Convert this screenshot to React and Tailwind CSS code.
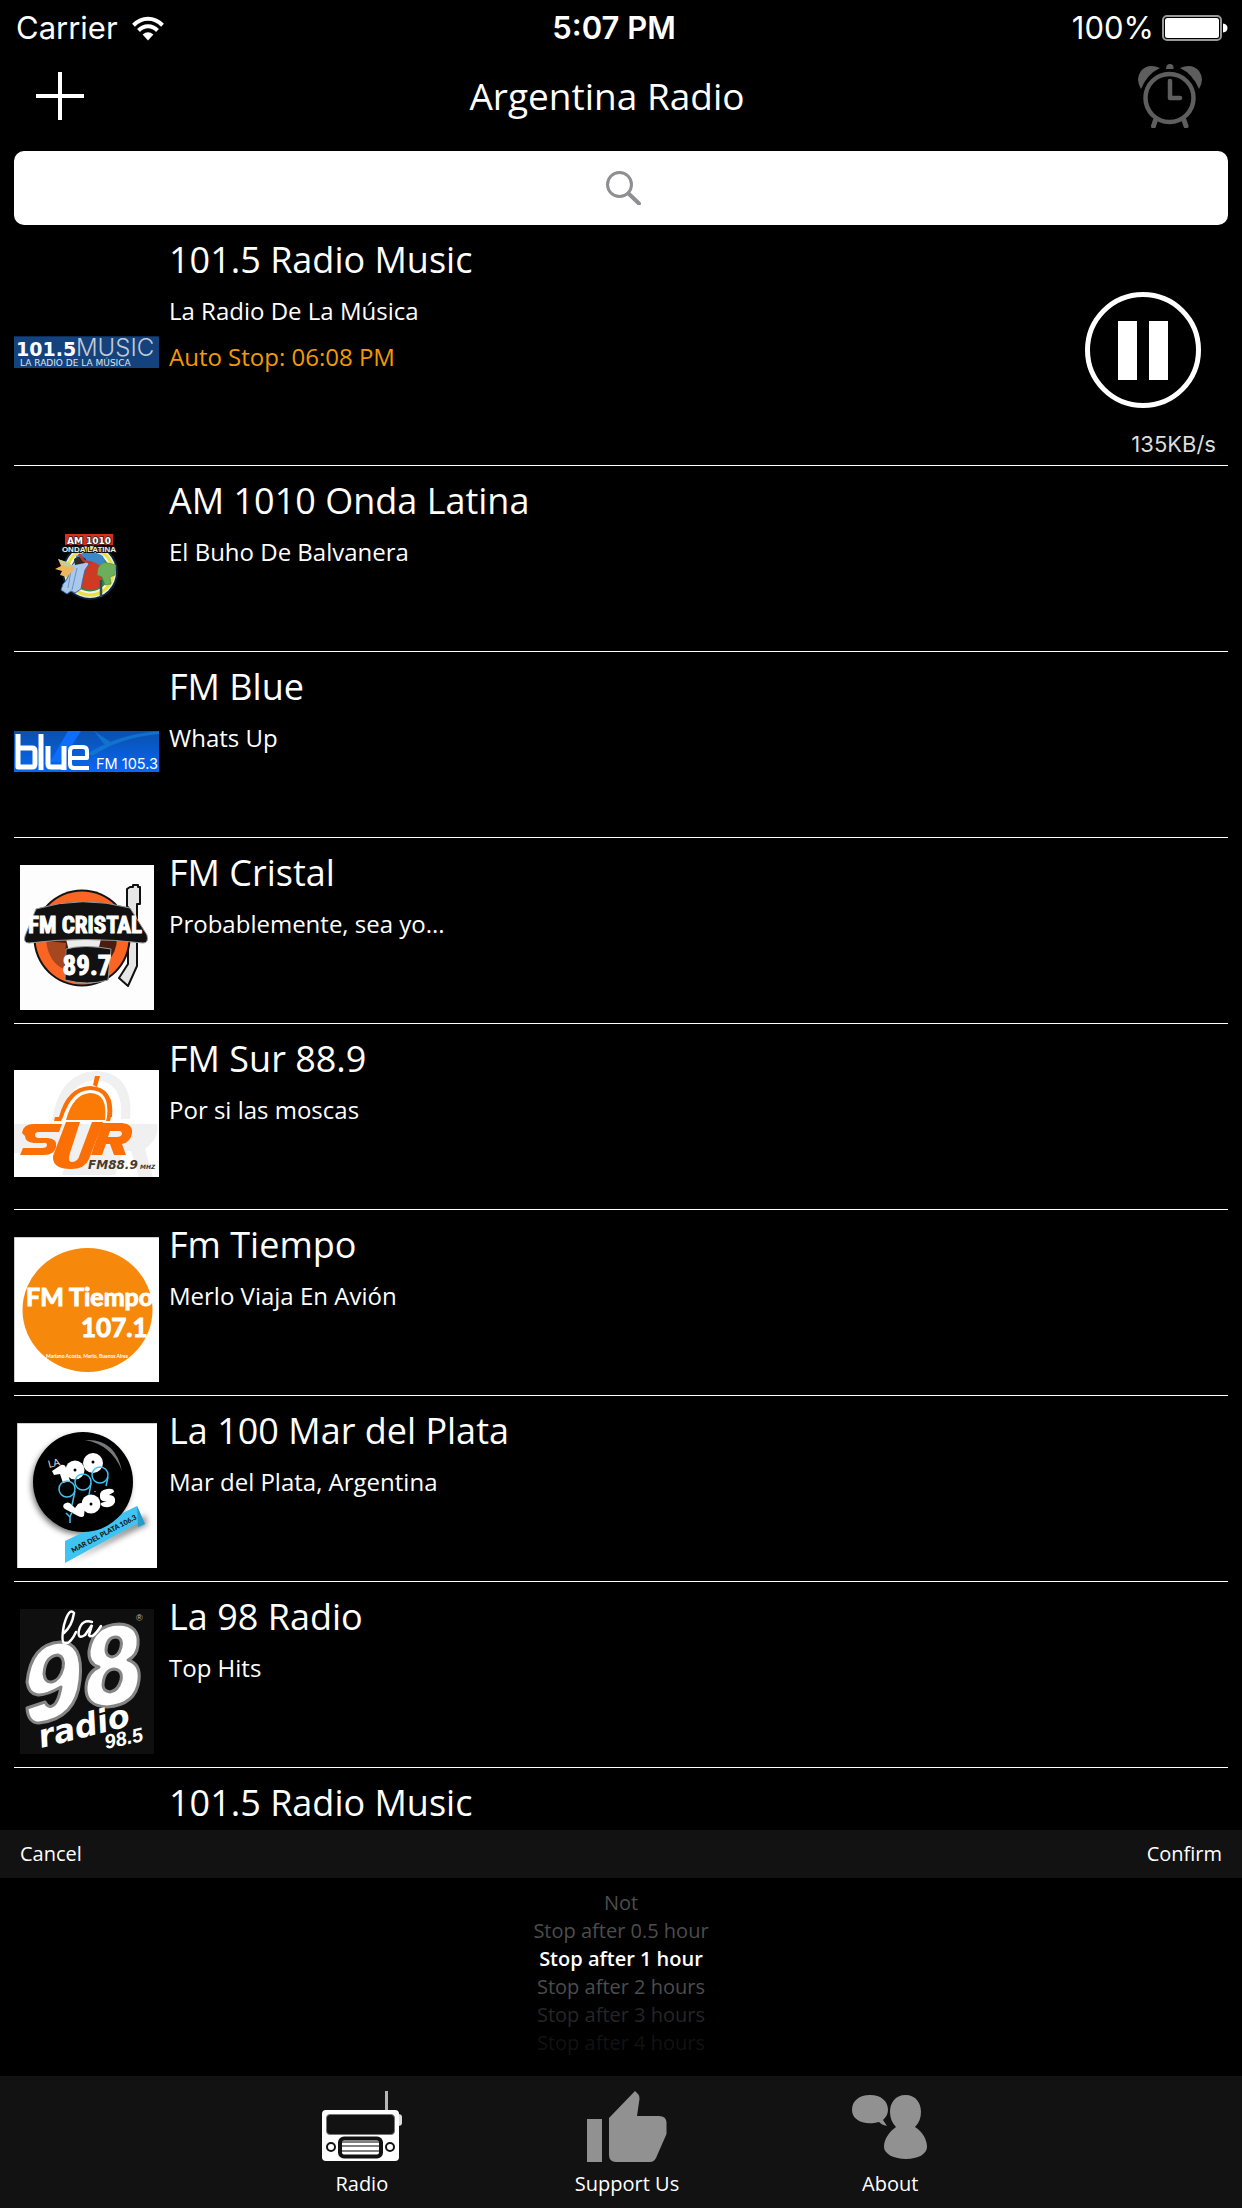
import { useState } from "react";

const narrow = '"Liberation Sans Narrow", "Roboto Condensed", "Liberation Sans", sans-serif';

function MusicLogo() {
  return (
    <svg viewBox="0 0 145 32" className="w-[145px]" role="img" aria-label="101.5 Music">
      <rect width="145" height="32" fill="#14427c" />
      <rect width="145" height="1" fill="#0c2c57" />
      <text x="2" y="20" fontFamily="DejaVu Sans" fontWeight="700" fontSize="19" fill="#fff">101.5</text>
      <text x="62" y="20" fontFamily="Inter, sans-serif" fontWeight="300" fontSize="24" fill="#c3cad6">MUSIC</text>
      <text x="6" y="30" fontFamily="DejaVu Sans" fontSize="9" fill="#dfe5ee">LA RADIO DE LA MÚSICA</text>
    </svg>
  );
}

function OndaLogo() {
  return (
    <svg viewBox="0 0 64 68" className="w-[64px]" role="img" aria-label="AM 1010 Onda Latina">
      <circle cx="35" cy="40" r="28" fill="#0b2440" />
      <circle cx="35" cy="40" r="26" fill="#e9ecdf" />
      <circle cx="35" cy="40" r="24.5" fill="#e8e337" />
      <circle cx="35" cy="40" r="21.5" fill="#f5f5ee" />
      <circle cx="35" cy="40" r="19.5" fill="#2d8a3e" />
      <path d="M21 24q14-8 27 0l3 10-14 4-17-4z" fill="#3b87c9" />
      <path d="M25 32q12-6 20 2l2 20q-9 6-20 2z" fill="#cf3a22" />
      <path d="M43 36q4-7 10-5l8 2-1 10-5 2 1 7-6 1-3-8-5-2z" fill="#6cae5b" stroke="#477f3c" strokeWidth=".6" />
      <path d="M20 30q8-6 14 2l-4 6q-3 12-4 19l-6 4-4-2-4 3-6-4 2-6q7-6 6-16z" fill="#a9c8ec" stroke="#3e68a4" strokeWidth="1" />
      <path d="M16 38l-3 18M22 36l-5 22" stroke="#6a92c8" strokeWidth="1" />
      <path d="M3 27l12 5 5 4-8 9-7-2 2-4-7-2 6-3z" fill="#efb65d" />
      <path d="M3 27l12 4 2 4-8-1z" fill="#c3cf9a" />
      <path d="M19 27q6-5 12 0l-1 4-10 2z" fill="#302825" />
      <path d="M24 22l5 7 8 2" fill="none" stroke="#c2352b" strokeWidth="2.500" />
      <path d="M46 48v17" stroke="#3a4550" strokeWidth="2.500" />
      <rect x="10" y="2" width="48" height="11" fill="#d92d20" />
      <text x="34" y="11.500" textAnchor="middle" fontFamily="DejaVu Sans" fontWeight="700" fontSize="9" fill="#fff" stroke="#222" strokeWidth="1.500" paintOrder="stroke">AM 1010</text>
      <text x="34" y="20" textAnchor="middle" fontFamily="Liberation Sans" fontWeight="700" fontSize="8" fill="#eee" stroke="#111" strokeWidth="2" paintOrder="stroke">ONDA LATINA</text>
    </svg>
  );
}

function BlueLogo() {
  return (
    <svg viewBox="0 0 145 41" className="w-[145px]" role="img" aria-label="Blue FM 105.3">
      <defs>
        <linearGradient id="blueSky" x1="0" y1="0" x2="0" y2="1">
          <stop offset="0" stopColor="#0a50ad" />
          <stop offset="1" stopColor="#0768f5" />
        </linearGradient>
      </defs>
      <rect width="145" height="41" fill="url(#blueSky)" />
      <path d="M54 0h13L47 31H36z" fill="#0d6dff" />
      <path d="M72 24Q100 4 145 0v3Q105 7 80 24zM80 0l18 12-8 1z" fill="#167fd3" opacity=".7" />
      <g fill="none" stroke="#fff" strokeWidth="5" strokeLinejoin="round">
        <path d="M4 3v33h14q3 0 3-3V20q0-3-3-3H4" />
        <path d="M27 3v36" />
        <path d="M34 15v18q0 3 3 3h13M50 15v24" />
        <path d="M56 27h17v-7q0-4-4-4h-9q-4 0-4 4v13q0 4 4 4h15" strokeWidth="4" />
      </g>
      <text x="82" y="38" fontFamily="Inter, sans-serif" fontSize="14.500" fill="#fff">FM 105.3</text>
    </svg>
  );
}

function CristalLogo() {
  return (
    <svg viewBox="0 0 134 145" className="w-[134px]" role="img" aria-label="FM Cristal 89.7">
      <rect width="134" height="145" fill="#fdfdfd" />
      <path d="M110 22h3v-2h5v2h2v17h-3v62l-9 20-9-8 9-14V42h-1V24z" fill="#e6e6e6" stroke="#111" strokeWidth="2" strokeLinejoin="round" />
      <circle cx="62" cy="73" r="48.500" fill="#111" />
      <circle cx="62" cy="73" r="46.500" fill="#fb6524" />
      <circle cx="62" cy="73" r="35" fill="#4b1d10" />
      <path d="M45 70h37l-5 20H50z" fill="#ececec" />
      <path d="M26 76q3 22 18 28l2-26z" fill="#a74720" />
      <path d="M16 44q46-14 94-1l17 27q2 8-4 8-58-7-114 0-6 0-4-7z" fill="#111" stroke="#999" strokeWidth="1" />
      <text x="65" y="68" textAnchor="middle" fontFamily={narrow} fontWeight="700" fontSize="23" fill="#fff" stroke="#fff" strokeWidth="1">FM CRISTAL</text>
      <path d="M46 84q18-5 45 0l-3 31q-20 6-43 0z" fill="#111" stroke="#999" strokeWidth="1" />
      <text x="67" y="110" textAnchor="middle" fontFamily={narrow} fontWeight="700" fontSize="27" fill="#fff" stroke="#fff" strokeWidth="1">89.7</text>
    </svg>
  );
}

function SurLogo() {
  return (
    <svg viewBox="0 0 145 107" className="w-[145px]" role="img" aria-label="Sur FM 88.9">
      <rect width="145" height="107" fill="#fff" />
      <path d="M38 50Q46 2 82 1q38 2 34 48h-9Q110 12 82 10 56 10 48 50z" fill="#f1f0f0" />
      <path d="M0 54h143q3 14-12 25l8 28h-14l-8-26h-8l-8 24H48l7-22H0z" fill="#f1f0f0" />
      <path d="M79 15l2-9h5l-3 11z" fill="#fb6f05" />
      <path d="M40 51l1-4h4q8-30 31-31 25 1 22 31h-1l-1 4h-4l1-4q3-27-17-27-18 0-27 27l-2 4z" fill="#fb6f05" />
      <path d="M52 50q7-26 24-27 18 0 15 27z" fill="#fb7a05" />
      <path d="M8 63q1-9 12-9h28l-3 8H25q-4 0-4 3t4 3h9q10 1 8 9-2 8-12 8H6l3-7h19q5 0 5-3t-4-2h-9q-9-1-9-7z" fill="#fb6f05" />
      <path d="M52 52h14L56 83q-3 9 2 9 6 0 8-8l12-32h11L75 89q-4 10-18 10-19 0-18-13z" fill="#fb6f05" />
      <path fillRule="evenodd" d="M88 53h20q11 1 10 10-1 9-10 11l4 11h-12l-4-11h-4l-4 11H77zm8 8l-2 6h9q4 0 5-3 0-3-3-3z" fill="#fb6f05" />
      <text x="74" y="99" fontFamily="DejaVu Sans" fontWeight="700" fontStyle="italic" fontSize="12" fill="#463a2a">FM88.9</text>
      <text x="126" y="99" fontFamily="DejaVu Sans" fontWeight="700" fontStyle="italic" fontSize="6" fill="#463a2a">MHZ</text>
    </svg>
  );
}

function TiempoLogo() {
  return (
    <svg viewBox="0 0 145 145" className="w-[145px]" role="img" aria-label="FM Tiempo 107.1">
      <rect width="145" height="145" fill="#fff" />
      <path d="M0 145V0h145" fill="none" stroke="#999" strokeWidth="1" />
      <ellipse cx="73.500" cy="73" rx="65" ry="62" fill="#f6890b" />
      <text x="12" y="69" fontFamily="Lato, sans-serif" fontWeight="700" fontSize="25" fill="#fff" stroke="#fff" strokeWidth="1">FM Tiempo</text>
      <text x="67" y="100" fontFamily="Lato, sans-serif" fontWeight="700" fontSize="26" fill="#fff" stroke="#fff" strokeWidth="1">107.1</text>
      <text x="32" y="121" fontFamily="Lato, sans-serif" fontWeight="700" fontSize="5" fill="#fff">Mariano Acosta, Merlo, Buenos Aires</text>
    </svg>
  );
}

function La100Logo() {
  return (
    <svg viewBox="0 0 140 145" className="w-[140px]" role="img" aria-label="La 100 y vos, Mar del Plata 106.3">
      <defs>
        <filter id="discShadow" x="-20%" y="-20%" width="140%" height="140%">
          <feGaussianBlur stdDeviation="3" />
        </filter>
      </defs>
      <rect width="140" height="145" fill="#fff" />
      <path d="M0 145V0h140" fill="none" stroke="#999" strokeWidth="1" />
      <circle cx="64" cy="62" r="49" fill="#000" opacity=".6" filter="url(#discShadow)" />
      <path d="M52 139l70-34 8-3-2-10z" fill="#000" opacity=".5" filter="url(#discShadow)" />
      <path d="M48 118l72-35 8 18-6 3-1-4-73 40z" fill="#3fc3f1" />
      <path d="M120 83l8 18-7 3z" fill="#279cc9" />
      <circle cx="66" cy="59" r="50" fill="#000" />
      <path d="M68 17q30-2 37 31-10-26-37-31z" fill="#77787b" />
      <text x="32" y="45" transform="rotate(-14 32 45)" fontFamily="Lato, sans-serif" fontSize="10" fill="#ddd">LA</text>
      <g fill="#fff">
        <path d="M35 48l9-6q4-1 5 3l4 13-7 2-3-9-6 1z" />
        <circle cx="58" cy="47" r="9.500" />
        <circle cx="76" cy="40" r="10" />
        <path d="M47 81q4-3 7 0l4 4 3-4q5-3 7 2l-1 10q-2 2-6 0l-13-7q-3-2-1-5z" />
        <circle cx="74" cy="81" r="9.500" />
        <path d="M83 74q-1-7 7-8 7-1 7 3l-5 3q7 0 6 7-2 6-10 5-5-1-4-4l6-2q-7 1-7-4z" />
      </g>
      <circle cx="58" cy="47" r="1.500" /><circle cx="76" cy="39" r="1.500" /><circle cx="74" cy="81" r="1.500" />
      <g fill="none" stroke="#3fc3f1" strokeWidth="1.500">
        <circle cx="50" cy="66" r="8" />
        <circle cx="66" cy="59" r="8" />
        <circle cx="83" cy="52" r="8" />
        <path d="M58 68l-3 14M74 60l-2 12M91 54l-2 9M78 68v1M49 90l4 4 2-5M53 94v6" />
      </g>
      <text x="56" y="130" transform="rotate(-28 56 130)" fontFamily="Lato, sans-serif" fontWeight="900" fontSize="7" fill="#111">MAR DEL PLATA 106.3</text>
    </svg>
  );
}

function La98Logo() {
  return (
    <svg viewBox="0 0 134 145" className="w-[134px]" role="img" aria-label="La 98 Radio 98.5">
      <rect width="134" height="145" fill="#0f0f0f" />
      <g fill="#fff" stroke="#858585" strokeWidth="3" fillRule="evenodd" strokeLinejoin="round">
        <path d="M7 73Q11 35 40 33q24 0 20 38-4 39-41 43-11 0-12-15l18-6q3 6 7 4 6-2 9-19-31 18-34-5zM24 65q1-18 14-19 7 2 5 13-3 12-11 14-7 1-8-8z" />
        <path d="M69 42q4-26 30-27 21 1 19 21-1 11-10 15 13 4 11 20-3 25-32 27-22-1-21-20 1-15 13-20-11-3-10-16zM86 41q1-13 10-13 7 1 5 10-2 9-9 10-6-1-6-7zM83 76q1-15 11-16 9 1 7 11-3 11-11 12-7-1-7-7z" />
      </g>
      <path d="M44 24q8-7 10-20-5-6-10 12-3 16 0 18 6 2 12-11M72 13q-10-3-13 8-2 10 6 5l7-10-3 10q3 5 12-9" fill="none" stroke="#fff" strokeWidth="2.500" strokeLinecap="round" />
      <text x="21" y="139" transform="rotate(-14 21 139)" fontFamily="DejaVu Sans" fontWeight="700" fontStyle="italic" fontSize="32" fill="#fff">radio</text>
      <text x="86" y="140" transform="rotate(-12 86 140)" fontFamily="Liberation Sans" fontWeight="700" fontStyle="italic" fontSize="20" fill="#fff">98.5</text>
      <text x="116" y="12" fontFamily="Liberation Sans" fontSize="9" fill="#bbb">®</text>
    </svg>
  );
}

function WifiIcon() {
  return (
    <svg viewBox="0 0 32 25" className="w-8" aria-hidden="true">
      <g fill="none" stroke="#fff" strokeWidth="4">
        <path d="M1.500 9.200Q8 2.800 16 2.800t14.500 6.400" />
        <path d="M6.500 14.500Q10.600 10.300 16 10.300t9.500 4.200" />
      </g>
      <path d="M10.600 18.500Q16 14 21.400 18.500L16 24.500z" fill="#fff" />
    </svg>
  );
}

function BatteryIcon() {
  return (
    <svg viewBox="0 0 66 26" className="w-[66px]" aria-hidden="true">
      <rect x="1" y="1" width="58" height="24" rx="4" fill="none" stroke="#999" strokeWidth="2" />
      <rect x="3" y="3" width="54" height="20" rx="2.500" fill="#fff" />
      <path d="M61 8.500q4.500.5 4.500 4.500T61 17.500z" fill="#fff" />
    </svg>
  );
}

function AlarmIcon() {
  return (
    <svg viewBox="0 0 64 64" className="w-16" aria-hidden="true">
      <g fill="#5e5e5e">
        <path d="M28 5q0-5 4-5t3.500 5z" />
        <path d="M3 25Q-3 15 3 7 10-1 22 4 9 10 3 25z" />
        <path d="M61 25q6-10 0-18Q54-1 42 4q13 6 19 21z" />
      </g>
      <circle cx="31.500" cy="34" r="24" fill="none" stroke="#5e5e5e" strokeWidth="4.500" />
      <path d="M32 17v17h10" fill="none" stroke="#5e5e5e" strokeWidth="4.500" strokeLinecap="round" strokeLinejoin="round" />
      <path d="M17.500 56l-2 6M46 56l2 6" stroke="#5e5e5e" strokeWidth="5" strokeLinecap="round" />
    </svg>
  );
}

function PauseIcon() {
  return (
    <svg viewBox="0 0 116 116" className="w-[116px]" aria-hidden="true">
      <circle cx="58" cy="58" r="55.500" fill="none" stroke="#fff" strokeWidth="5" />
      <path d="M33 29h19v59H33zM64 29h19v59H64z" fill="#fff" />
    </svg>
  );
}

function RadioIcon() {
  return (
    <svg viewBox="0 0 80 71" className="h-[71px]" aria-hidden="true">
      <path d="M63 0h3v22h-3z" fill="#b5b5b5" />
      <path d="M76 23q4 0 4 3v6q0 3-4 3z" fill="#ddd" />
      <rect y="19" width="77" height="51" rx="4" fill="#fff" />
      <rect x="4.500" y="23.500" width="68" height="20" rx="3.500" fill="#121212" stroke="#777" />
      <circle cx="9" cy="56" r="4" fill="#fff" stroke="#121212" strokeWidth="2" />
      <circle cx="68" cy="56" r="4" fill="#fff" stroke="#121212" strokeWidth="2" />
      <rect x="18" y="47.500" width="41" height="18" rx="4" fill="#fff" stroke="#121212" strokeWidth="4" />
      <path d="M20 51h37M20 55h37M20 60h37" stroke="#555" strokeWidth="1.500" />
    </svg>
  );
}

function ThumbIcon() {
  return (
    <svg viewBox="0 0 80 71" className="h-[71px]" aria-hidden="true">
      <path d="M0 28h15v43H0zM22 27L48 0l3 3q2 2 1.500 5L50 25h22q7 0 7.500 6v12L69 67q-2 4-6 4H29q-7 0-7-7z" fill="#919191" />
    </svg>
  );
}

function PeopleIcon() {
  return (
    <svg viewBox="0 0 76 71" className="h-[71px]" aria-hidden="true">
      <g fill="#919191">
        <path d="M18 4c11 0 18 6 18 15 0 4-2 7-5 10l4 6c-4-1-6-2-8-4-15 4-27-2-27-12C0 10 7 4 18 4z" />
        <path d="M53.500 4C64 4 69 12 69 21c0 6-2 11-6 15 8 5 12 13 12 20 0 7-9 12-21 12s-22-5-22-12c0-8 5-15 12-20-4-4-6-9-6-15 0-9 5-17 15.500-17z" />
      </g>
    </svg>
  );
}

const stations = [
  { name: "101.5 Radio Music", tagline: "La Radio De La Música", Logo: MusicLogo, playing: true },
  { name: "AM 1010 Onda Latina", tagline: "El Buho De Balvanera", Logo: OndaLogo },
  { name: "FM Blue", tagline: "Whats Up", Logo: BlueLogo },
  { name: "FM Cristal", tagline: "Probablemente, sea yo...", Logo: CristalLogo },
  { name: "FM Sur 88.9", tagline: "Por si las moscas", Logo: SurLogo },
  { name: "Fm Tiempo", tagline: "Merlo Viaja En Avión", Logo: TiempoLogo },
  { name: "La 100 Mar del Plata", tagline: "Mar del Plata, Argentina", Logo: La100Logo },
  { name: "La 98 Radio", tagline: "Top Hits", Logo: La98Logo },
  { name: "101.5 Radio Music", Logo: MusicLogo },
];

const timers = [
  { label: "Not", tone: "text-[#4d4d4d]" },
  { label: "Stop after 0.5 hour", tone: "text-[#4d4d4d]" },
  { label: "Stop after 1 hour", tone: "text-[#4d4d4d]" },
  { label: "Stop after 2 hours", tone: "text-[#4d4d4d]" },
  { label: "Stop after 3 hours", tone: "text-[#262626]" },
  { label: "Stop after 4 hours", tone: "text-[#121212]" },
];

const tabs = [
  { label: "Radio", Icon: RadioIcon },
  { label: "Support Us", Icon: ThumbIcon },
  { label: "About", Icon: PeopleIcon },
];

function StationRow({ station }) {
  const { name, tagline, Logo, playing } = station;
  return (
    <li className={`flex shrink-0 border-b border-white ${playing ? "h-[241px]" : "h-[186px]"}`}>
      <div className="flex w-[145px] shrink-0 items-center justify-center pt-[26px] pb-3">
        <Logo />
      </div>
      <div className="min-w-0 flex-1 pt-[11px] pl-[10px]">
        <h2 className="text-4xl leading-[48px]">{name}</h2>
        <p className="mt-1 text-2xl leading-[46px]">{tagline}</p>
        {playing && <p className="text-2xl leading-[46px] text-[#f09a05]">Auto Stop: 06:08 PM</p>}
      </div>
      {playing && (
        <div className="flex flex-col items-end justify-end pb-[9px]">
          <button type="button" aria-label="Pause" className="mr-[27px]">
            <PauseIcon />
          </button>
          <span className="mt-6 mr-3 font-['Inter',sans-serif] text-[22px] leading-6 text-[#ddd]">135KB/s</span>
        </div>
      )}
    </li>
  );
}

export default function App() {
  const [timer, setTimer] = useState("Stop after 1 hour");
  return (
    <div className="flex h-screen flex-col bg-black font-['Open_Sans','Noto_Sans',sans-serif] text-white">
      <div className="grid h-14 shrink-0 grid-cols-[1fr_auto_1fr] items-center pr-[14px] font-['Inter',sans-serif] text-[31px] leading-9">
        <div className="flex items-center gap-[14px] pl-4">
          <span>Carrier</span>
          <WifiIcon />
        </div>
        <span className="font-semibold">5:07 PM</span>
        <div className="flex items-center justify-end gap-2">
          <span>100%</span>
          <BatteryIcon />
        </div>
      </div>

      <header className="grid h-20 shrink-0 grid-cols-[1fr_auto_1fr] items-center pr-7">
        <button type="button" aria-label="Add station" className="ml-9 w-12">
          <svg viewBox="0 0 48 48" className="w-12" aria-hidden="true">
            <path d="M24 0v48M0 24h48" stroke="#fff" strokeWidth="4" />
          </svg>
        </button>
        <h1 className="text-[37px] leading-[48px]">Argentina Radio</h1>
        <button type="button" aria-label="Sleep timer" className="mr-3 justify-self-end">
          <AlarmIcon />
        </button>
      </header>

      <main className="flex min-h-0 flex-1 flex-col overflow-hidden px-[14px] pt-[15px]">
        <div className="relative shrink-0">
          <input type="search" aria-label="Search stations" className="block h-[74px] w-full rounded-[10px] bg-white px-5 text-2xl text-black outline-none" />
          <div className="pointer-events-none absolute inset-0 flex items-center justify-center pl-1">
            <svg viewBox="0 0 35 34" className="w-[35px]" aria-hidden="true">
              <circle cx="13.500" cy="13.500" r="12" fill="none" stroke="#8e8e93" strokeWidth="3" />
              <path d="M22.500 22.500l10.500 10" stroke="#8e8e93" strokeWidth="4" strokeLinecap="round" />
            </svg>
          </div>
        </div>
        <ul className="flex flex-col">
          {stations.map((station, i) => (
            <StationRow key={i} station={station} />
          ))}
        </ul>
      </main>

      <section aria-label="Sleep timer" className="shrink-0 text-xl">
        <div className="flex h-12 items-center justify-between bg-[#121212] px-5">
          <button type="button">Cancel</button>
          <button type="button">Confirm</button>
        </div>
        <ul className="flex h-[198px] flex-col items-center bg-black pt-[11px]">
          {timers.map(({ label, tone }) => (
            <li key={label} className="leading-7">
              <button
                type="button"
                aria-pressed={timer === label}
                onClick={() => setTimer(label)}
                className={timer === label ? "font-semibold text-white" : tone}
              >
                {label}
              </button>
            </li>
          ))}
        </ul>
      </section>

      <nav className="flex h-[132px] shrink-0 justify-center gap-[173px] bg-[#121212] pt-[15px] pl-2">
        {tabs.map(({ label, Icon }) => (
          <a key={label} href="#" className="flex flex-col items-center gap-2 text-xl leading-7">
            <Icon />
            {label}
          </a>
        ))}
      </nav>
    </div>
  );
}
